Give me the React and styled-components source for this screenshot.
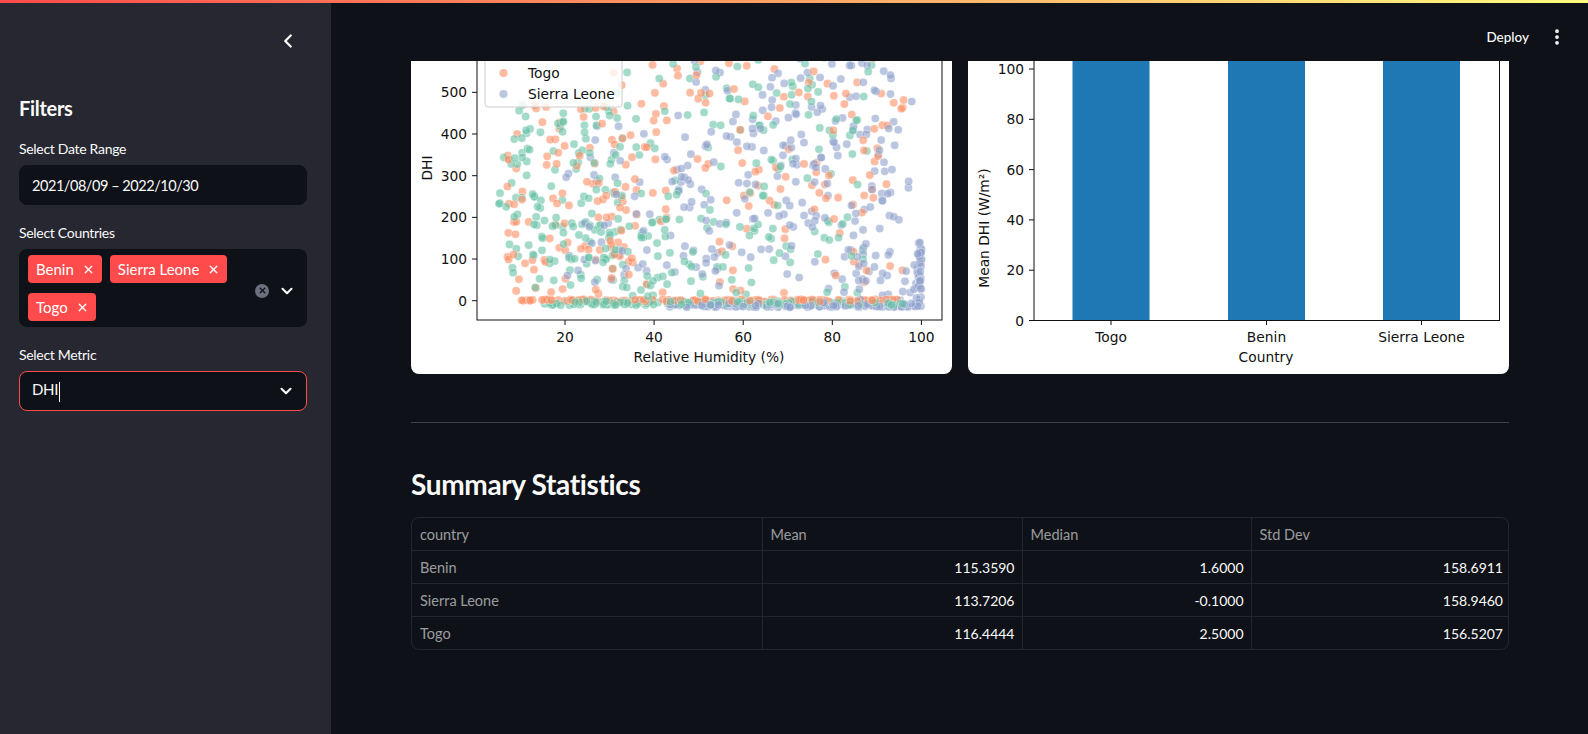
import React from "react";
import styled, { createGlobalStyle } from "styled-components";
import { ChevronLeft, ChevronDown, EllipsisVertical, X } from "lucide-react";

const GlobalStyle = createGlobalStyle`
  html, body {
    margin: 0;
    height: 100%;
    overflow: hidden;
    background: #0e1117;
  }
`;

const uiFont = `"Lato", "Open Sans", sans-serif`;
const plotFont = `"DejaVu Sans", sans-serif`;

const Shell = styled.div`
  display: flex;
  height: 100vh;
  font-family: ${uiFont};
  color: #fafafa;
  position: relative;
`;

const TopStripe = styled.div`
  position: absolute;
  top: 0;
  left: 0;
  right: 0;
  height: 3px;
  background: linear-gradient(90deg, #ff4b4b, #fffd80);
  z-index: 5;
`;

const Sidebar = styled.aside`
  width: 331px;
  flex: none;
  box-sizing: border-box;
  background: #262730;
  padding: 0 24px 0 19px;
  display: flex;
  flex-direction: column;
  gap: 18px;
`;

const CollapseRow = styled.div`
  height: 74px;
  padding: 4px 8px 0 0;
  display: flex;
  align-items: center;
  justify-content: flex-end;
`;

const FiltersTitle = styled.h2`
  margin: 0 0 1px;
  font-size: 20px;
  line-height: 24px;
  font-weight: 700;
  letter-spacing: -0.3px;
`;

const Field = styled.div`
  display: flex;
  flex-direction: column;
  gap: 6px;
`;

const FieldLabel = styled.label`
  font-size: 14px;
  line-height: 20px;
  letter-spacing: -0.3px;
  color: #fafafa;
`;

const InputBox = styled.div`
  height: 40px;
  box-sizing: border-box;
  background: #0e1117;
  border-radius: 8px;
  border: 1px solid ${(p) => (p.$focused ? "#ff4b4b" : "#0e1117")};
  padding: 0 11px 0 12px;
  display: flex;
  align-items: center;
  justify-content: space-between;
  font-size: 14.5px;
  letter-spacing: -0.45px;
`;

const MetricValue = styled.span`
  font-size: 15px;
  letter-spacing: -0.3px;
`;

const Caret = styled.span`
  display: inline-block;
  width: 1px;
  height: 20px;
  background: #fafafa;
  vertical-align: middle;
  margin-left: 1px;
`;

const MultiBox = styled.div`
  height: 78px;
  box-sizing: border-box;
  background: #0e1117;
  border-radius: 8px;
  padding: 6px 11px 6px 9px;
  display: flex;
  align-items: center;
  justify-content: space-between;
`;

const TagList = styled.div`
  width: 217px;
  display: flex;
  flex-wrap: wrap;
  gap: 10px 8px;
`;

const Tag = styled.span`
  height: 28px;
  box-sizing: border-box;
  background: #ff4b4b;
  border-radius: 4px;
  padding: 0 7px 0 8px;
  display: inline-flex;
  align-items: center;
  gap: 8px;
  font-size: 15px;
  color: #fff;
`;

const BoxIcons = styled.div`
  display: flex;
  align-items: center;
  gap: 9px;
  margin-top: 5px;
`;

const ClearDot = styled.span`
  width: 14px;
  height: 14px;
  border-radius: 50%;
  background: #6b6f7e;
  color: #0e1117;
  display: flex;
  align-items: center;
  justify-content: center;
`;

const Main = styled.main`
  flex: 1;
  min-width: 0;
  display: flex;
  flex-direction: column;
  background: #0e1117;
`;

const Header = styled.header`
  height: 61px;
  flex: none;
  box-sizing: border-box;
  padding: 13px 21px 0 0;
  display: flex;
  align-items: center;
  justify-content: flex-end;
  gap: 18px;
  font-size: 13.5px;
`;

const DeployLabel = styled.span`
  font-weight: 500;
`;

const Content = styled.div`
  flex: 1;
  padding: 0 79px 0 80px;
  overflow: hidden;
`;

const ChartRow = styled.div`
  display: grid;
  grid-template-columns: 541px 541px;
  gap: 16px;
`;

const ChartCard = styled.div`
  height: 313px;
  background: #fff;
  border-radius: 0 0 8px 8px;
  overflow: hidden;
`;

const ChartSvg = styled.svg`
  display: block;
  width: 541px;
  height: 313px;
`;

const PlotText = styled.text`
  font-family: ${plotFont};
  font-size: 13.8px;
  fill: #111;
  text-anchor: ${(p) => p.$anchor || "middle"};
  dominant-baseline: central;
`;

const Divider = styled.hr`
  margin: 48px 0 0;
  border: none;
  height: 1px;
  background: rgba(250, 250, 250, 0.2);
`;

const SectionTitle = styled.h2`
  margin: 44px 0 16px;
  font-size: 28px;
  line-height: 34px;
  font-weight: 700;
  letter-spacing: -0.35px;
`;

const TableFrame = styled.div`
  border: 1px solid #24272e;
  border-radius: 8px;
  overflow: hidden;
`;

const StatsTable = styled.table`
  width: 100%;
  table-layout: fixed;
  border-collapse: collapse;
`;

const Cell = styled.td`
  height: 33px;
  box-sizing: border-box;
  padding: 2px 7px 0 8px;
  border-top: 1px solid #24272e;
  border-left: 1px solid #24272e;
  font-size: ${(p) => (p.$num ? "14px" : "14.5px")};
  text-align: ${(p) => (p.$num ? "right" : "left")};
  color: ${(p) => (p.$num ? "#fafafa" : "rgba(250, 250, 250, 0.6)")};
  font-weight: 400;

  thead & {
    height: 32px;
    border-top: none;
  }
  &:first-child {
    border-left: none;
  }
`;

const columns = [
  { name: "country", width: 350 },
  { name: "Mean", width: 260 },
  { name: "Median", width: 229 },
  { name: "Std Dev", width: 259 },
];

const stats = [
  ["Benin", "115.3590", "1.6000", "158.6911"],
  ["Sierra Leone", "113.7206", "-0.1000", "158.9460"],
  ["Togo", "116.4444", "2.5000", "156.5207"],
];

const COLORS = { benin: "#66c2a5", togo: "#fc8d62", sierra: "#8da0cb" };

// scatter axes, in card coordinates (card starts at 411,61)
const sx = (v) => 154 + (v - 20) * 4.455;
const sy = (v) => 239.7 - v * 0.4167;

function makeRandom(seed) {
  let a = seed;
  return () => {
    a = (a + 0x6d2b79f5) | 0;
    let t = Math.imul(a ^ (a >>> 15), 1 | a);
    t = (t + Math.imul(t ^ (t >>> 7), 61 | t)) ^ t;
    return ((t ^ (t >>> 14)) >>> 0) / 4294967296;
  };
}

function buildPoints() {
  const rnd = makeRandom(4127);
  const pts = [];
  const add = (n, color, fx, fy) => {
    for (let i = 0; i < n; i++) pts.push({ x: fx(), y: fy(), color });
  };
  const span = (a, b) => () => a + rnd() * (b - a);
  // readings that sit on the zero line
  add(150, COLORS.togo, span(10, 97), span(-2, 3));
  add(190, COLORS.benin, span(15, 96), span(-11, -1));
  add(170, COLORS.sierra, span(43, 100), span(-16, -4));
  add(40, COLORS.sierra, () => 100 - rnd() * rnd() * 2, span(0, 140));
  add(28, COLORS.sierra, span(82, 100), span(0, 130));
  // spread of daytime readings
  add(95, COLORS.togo, span(6, 40), span(10, 470));
  add(140, COLORS.togo, span(30, 97), span(15, 600));
  add(105, COLORS.benin, span(5, 32), span(60, 470));
  add(60, COLORS.benin, span(12, 45), span(10, 200));
  add(150, COLORS.benin, span(30, 90), span(15, 600));
  add(60, COLORS.sierra, span(20, 55), span(30, 420));
  add(150, COLORS.sierra, span(45, 98), span(20, 600));
  add(45, COLORS.sierra, span(70, 95), span(150, 600));
  for (let i = pts.length - 1; i > 0; i--) {
    const j = Math.floor(rnd() * (i + 1));
    [pts[i], pts[j]] = [pts[j], pts[i]];
  }
  return pts;
}

const points = buildPoints();

const ScatterChart = () => (
  <ChartSvg viewBox="0 0 541 313">
    {points.map((p, i) => (
      <circle
        key={i}
        cx={sx(p.x)}
        cy={sy(p.y)}
        r="4.1"
        fill={p.color}
        fillOpacity="0.6"
        stroke="#fff"
        strokeOpacity="0.6"
        strokeWidth="0.6"
      />
    ))}
    <rect x="66" y="-2" width="465" height="261" fill="none" stroke="#111" strokeWidth="1" />
    {[20, 40, 60, 80, 100].map((v) => (
      <g key={v}>
        <line x1={sx(v)} x2={sx(v)} y1="259" y2="264" stroke="#111" />
        <PlotText x={sx(v)} y="276">{v}</PlotText>
      </g>
    ))}
    {[0, 100, 200, 300, 400, 500].map((v) => (
      <g key={v}>
        <line x1="61" x2="66" y1={sy(v)} y2={sy(v)} stroke="#111" />
        <PlotText x="56" y={sy(v)} $anchor="end">{v}</PlotText>
      </g>
    ))}
    <PlotText x="298" y="296">Relative Humidity (%)</PlotText>
    <PlotText x="16" y="107" transform="rotate(-90 16 107)">DHI</PlotText>
    <rect x="74" y="-10" width="137" height="56" rx="3" fill="#fff" fillOpacity="0.8" stroke="#ccc" />
    <circle cx="92.5" cy="12" r="4.1" fill={COLORS.togo} fillOpacity="0.6" />
    <circle cx="92.5" cy="33" r="4.1" fill={COLORS.sierra} fillOpacity="0.6" />
    <PlotText x="117" y="12" $anchor="start">Togo</PlotText>
    <PlotText x="117" y="33" $anchor="start">Sierra Leone</PlotText>
  </ChartSvg>
);

const barTicks = [0, 20, 40, 60, 80, 100];
const bars = [
  { name: "Togo", x: 104.5 },
  { name: "Benin", x: 260 },
  { name: "Sierra Leone", x: 415 },
];

const BarChart = () => (
  <ChartSvg viewBox="0 0 541 313">
    {bars.map((b) => (
      <g key={b.name}>
        <rect x={b.x} y="0" width="77" height="259.5" fill="#1f77b4" />
        <line x1={b.x + 38.5} x2={b.x + 38.5} y1="259.5" y2="264" stroke="#111" />
        <PlotText x={b.x + 38.5} y="276">{b.name}</PlotText>
      </g>
    ))}
    <rect x="66" y="-2" width="465.5" height="261.5" fill="none" stroke="#111" strokeWidth="1" />
    {barTicks.map((v) => (
      <g key={v}>
        <line x1="61" x2="66" y1={259.5 - v * 2.515} y2={259.5 - v * 2.515} stroke="#111" />
        <PlotText x="56" y={259.5 - v * 2.515} $anchor="end">{v}</PlotText>
      </g>
    ))}
    <PlotText x="298" y="296">Country</PlotText>
    <PlotText x="16" y="167" transform="rotate(-90 16 167)">Mean DHI (W/m²)</PlotText>
  </ChartSvg>
);

const App = () => {
  return (
    <Shell>
      <GlobalStyle />
      <TopStripe />
      <Sidebar>
        <CollapseRow>
          <ChevronLeft size={22} strokeWidth={2.5} color="#fafafa" />
        </CollapseRow>
        <FiltersTitle>Filters</FiltersTitle>
        <Field>
          <FieldLabel>Select Date Range</FieldLabel>
          <InputBox>2021/08/09 – 2022/10/30</InputBox>
        </Field>
        <Field>
          <FieldLabel>Select Countries</FieldLabel>
          <MultiBox>
            <TagList>
              {["Benin", "Sierra Leone", "Togo"].map((name) => (
                <Tag key={name}>
                  {name}
                  <X size={13} strokeWidth={2.5} />
                </Tag>
              ))}
            </TagList>
            <BoxIcons>
              <ClearDot>
                <X size={9} strokeWidth={3.5} />
              </ClearDot>
              <ChevronDown size={18} strokeWidth={2.8} color="#fafafa" />
            </BoxIcons>
          </MultiBox>
        </Field>
        <Field>
          <FieldLabel>Select Metric</FieldLabel>
          <InputBox $focused>
            <MetricValue>
              DHI
              <Caret />
            </MetricValue>
            <ChevronDown size={18} strokeWidth={2.8} color="#fafafa" />
          </InputBox>
        </Field>
      </Sidebar>
      <Main>
        <Header>
          <DeployLabel>Deploy</DeployLabel>
          <EllipsisVertical size={20} strokeWidth={2.5} color="#fafafa" />
        </Header>
        <Content>
          <ChartRow>
            <ChartCard>
              <ScatterChart />
            </ChartCard>
            <ChartCard>
              <BarChart />
            </ChartCard>
          </ChartRow>
          <Divider />
          <SectionTitle>Summary Statistics</SectionTitle>
          <TableFrame>
            <StatsTable>
              <colgroup>
                {columns.map((c) => (
                  <col key={c.name} style={{ width: c.width }} />
                ))}
              </colgroup>
              <thead>
                <tr>
                  {columns.map((c) => (
                    <Cell as="th" key={c.name}>{c.name}</Cell>
                  ))}
                </tr>
              </thead>
              <tbody>
                {stats.map((row) => (
                  <tr key={row[0]}>
                    {row.map((value, i) => (
                      <Cell key={i} $num={i > 0}>{value}</Cell>
                    ))}
                  </tr>
                ))}
              </tbody>
            </StatsTable>
          </TableFrame>
        </Content>
      </Main>
    </Shell>
  );
};

export default App;
